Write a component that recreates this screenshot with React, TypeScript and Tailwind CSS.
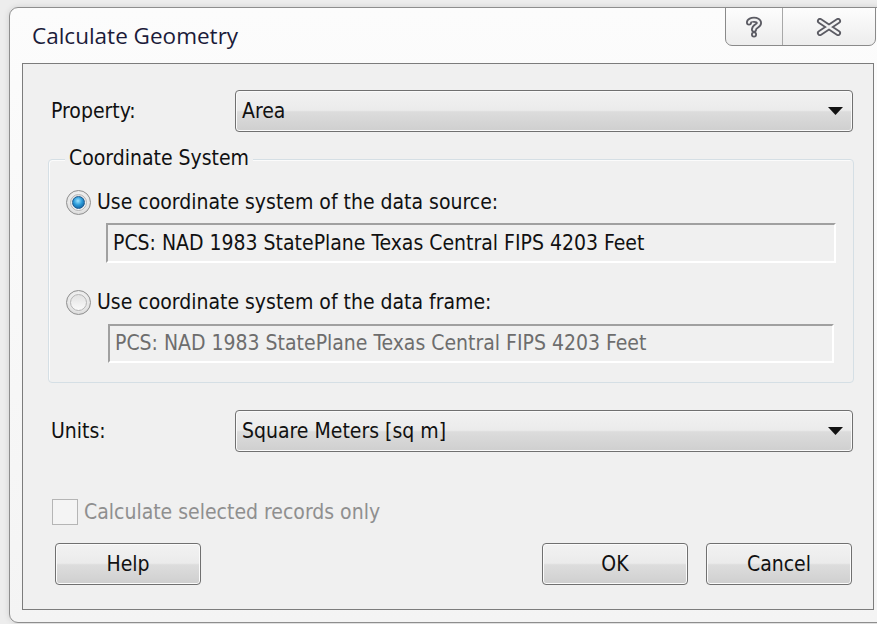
import React from "react";

const body = { fontFamily: '"DejaVu Sans Condensed", "DejaVu Sans", sans-serif' };
const title = { fontFamily: '"Open Sans", "Noto Sans", sans-serif' };

function DropArrow() {
  return (
    <svg width="15" height="8" viewBox="0 0 15 8" className="shrink-0">
      <path d="M0 0 H15 L7.5 8 Z" fill="#111" />
    </svg>
  );
}

function Combo({ value }: { value: string }) {
  return (
    <div className="w-[618px] h-[42px] rounded-[4px] border border-[#707070] bg-[linear-gradient(#f2f2f2_0%,#ebebeb_48%,#dcdcdc_52%,#cfcfcf_100%)] flex items-center pl-[6px] pr-[9px] shadow-[inset_0_0_0_1px_#fafafa]">
      <span className="flex-1 text-[#111]">{value}</span>
      <DropArrow />
    </div>
  );
}

function Button({ label }: { label: string }) {
  return (
    <div className="w-[146px] h-[42px] rounded-[4px] border border-[#707070] bg-[linear-gradient(#f2f2f2_0%,#ebebeb_48%,#dddddd_52%,#cfcfcf_100%)] shadow-[inset_0_0_0_1px_#fbfbfb] flex items-center justify-center text-[#111]">
      {label}
    </div>
  );
}

function Radio({ checked }: { checked: boolean }) {
  return (
    <div className="w-[25px] h-[25px] rounded-full border border-[#8f8f8f] bg-[radial-gradient(circle_at_50%_40%,#ffffff_0%,#e6e6e6_60%,#c9c9c9_100%)] flex items-center justify-center shrink-0">
      <div className="w-[17px] h-[17px] rounded-full border border-[#b5b5b5] bg-[linear-gradient(#e2e2e2,#fafafa)] flex items-center justify-center">
        {checked && (
          <div className="w-[13px] h-[13px] rounded-full bg-[radial-gradient(circle_at_45%_35%,#9fe4ff_0%,#2a9ad8_45%,#0b4c8c_100%)] border border-[#1d5a8f]" />
        )}
      </div>
    </div>
  );
}

function ReadOnlyBox({ text, muted, className }: { text: string; muted?: boolean; className: string }) {
  return (
    <div
      className={`${className} border-t-2 border-l-2 border-t-[#a0a0a0] border-l-[#a0a0a0] border-b-2 border-r-2 border-b-white border-r-white bg-[#f0f0f0] flex items-center pl-[5px] ${
        muted ? "text-[#6d6d6d]" : "text-[#111]"
      }`}
    >
      {text}
    </div>
  );
}

function CaptionButtons() {
  return (
    <div className="absolute left-[725px] top-[7px] w-[151px] h-[39px] rounded-b-[7px] border border-[#8a8a8a] bg-[linear-gradient(#fdfdfd,#ededed)] flex">
      <div className="w-[57px] h-full border-r border-[#a8a8a8] flex items-center justify-center">
        <svg width="18" height="22" viewBox="0 0 18 22">
          <g fill="none" strokeLinecap="round" strokeLinejoin="round">
            <path d="M4 6.5 C4 3 14 2.5 14 7 C14 10 9 10 9 13.5 M9 18.5 V18.6" stroke="#5b5b63" strokeWidth="6" />
            <path d="M4 6.5 C4 3 14 2.5 14 7 C14 10 9 10 9 13.5 M9 18.5 V18.6" stroke="#f2f2f2" strokeWidth="2.4" />
          </g>
        </svg>
      </div>
      <div className="flex-1 h-full flex items-center justify-center">
        <svg width="28" height="18" viewBox="0 0 28 18">
          <g fill="none" strokeLinecap="round">
            <path d="M5 3 L23 15 M23 3 L5 15" stroke="#5b5b63" strokeWidth="6" />
            <path d="M5 3 L23 15 M23 3 L5 15" stroke="#f2f2f2" strokeWidth="2.4" />
          </g>
        </svg>
      </div>
    </div>
  );
}

export default function App() {
  return (
    <div className="relative w-[877px] h-[624px] overflow-hidden bg-[#ededed]">
      <div className="ml-[9px] mt-[7px] w-[880px] h-[616px] rounded-[9px] border border-[#8e8e8e] bg-[linear-gradient(#fcfcfc,#f4f4f4)] flex flex-col px-[12px] pb-[12px] shadow-[0_0_6px_rgba(0,0,0,0.12)]">
        <div className="h-[55px] flex items-center pl-[10px] text-[22.5px] text-[#1b1b3a] shrink-0" style={title}>
          Calculate Geometry
        </div>
        <div
          className="w-[852px] flex-1 border border-[#7c7c7c] bg-[#f0f0f0] flex flex-col text-[21px] leading-none"
          style={body}
        >
          {/* Property */}
          <div className="mt-[26px] flex items-center pl-[28px]">
            <span className="w-[184px] text-[#111]">Property:</span>
            <Combo value="Area" />
          </div>

          {/* Coordinate system group */}
          <div className="relative mt-[27px] ml-[25px] w-[806px] h-[224px] rounded-[4px] border border-[#d5dfe5] shadow-[inset_1px_1px_0_#fbfbfb]">
            <span className="absolute left-[16px] -top-[12px] px-[4px] bg-[#f0f0f0] text-[#111]">Coordinate System</span>
            <div className="mt-[30px] ml-[17px] flex items-center gap-[6px]">
              <Radio checked />
              <span className="text-[#111]">Use coordinate system of the data source:</span>
            </div>
            <ReadOnlyBox
              className="mt-[8px] ml-[57px] w-[730px] h-[40px]"
              text="PCS: NAD 1983 StatePlane Texas Central FIPS 4203 Feet"
            />
            <div className="mt-[27px] ml-[17px] flex items-center gap-[6px]">
              <Radio checked={false} />
              <span className="text-[#111]">Use coordinate system of the data frame:</span>
            </div>
            <ReadOnlyBox
              muted
              className="mt-[9px] ml-[59px] w-[726px] h-[39px]"
              text="PCS: NAD 1983 StatePlane Texas Central FIPS 4203 Feet"
            />
          </div>

          {/* Units */}
          <div className="mt-[27px] flex items-center pl-[28px]">
            <span className="w-[184px] text-[#111]">Units:</span>
            <Combo value="Square Meters [sq m]" />
          </div>

          {/* Selected records only */}
          <div className="mt-[47px] ml-[29px] flex items-center gap-[6px]">
            <div className="w-[26px] h-[26px] border border-[#b5b5b5] bg-[#f4f4f4]" />
            <span className="text-[#8f8f8f]">Calculate selected records only</span>
          </div>

          {/* Buttons */}
          <div className="mt-[18px] flex items-center pl-[32px] pr-[21px]">
            <Button label="Help" />
            <div className="flex-1" />
            <Button label="OK" />
            <div className="w-[18px]" />
            <Button label="Cancel" />
          </div>
        </div>
      </div>
      <CaptionButtons />
    </div>
  );
}
